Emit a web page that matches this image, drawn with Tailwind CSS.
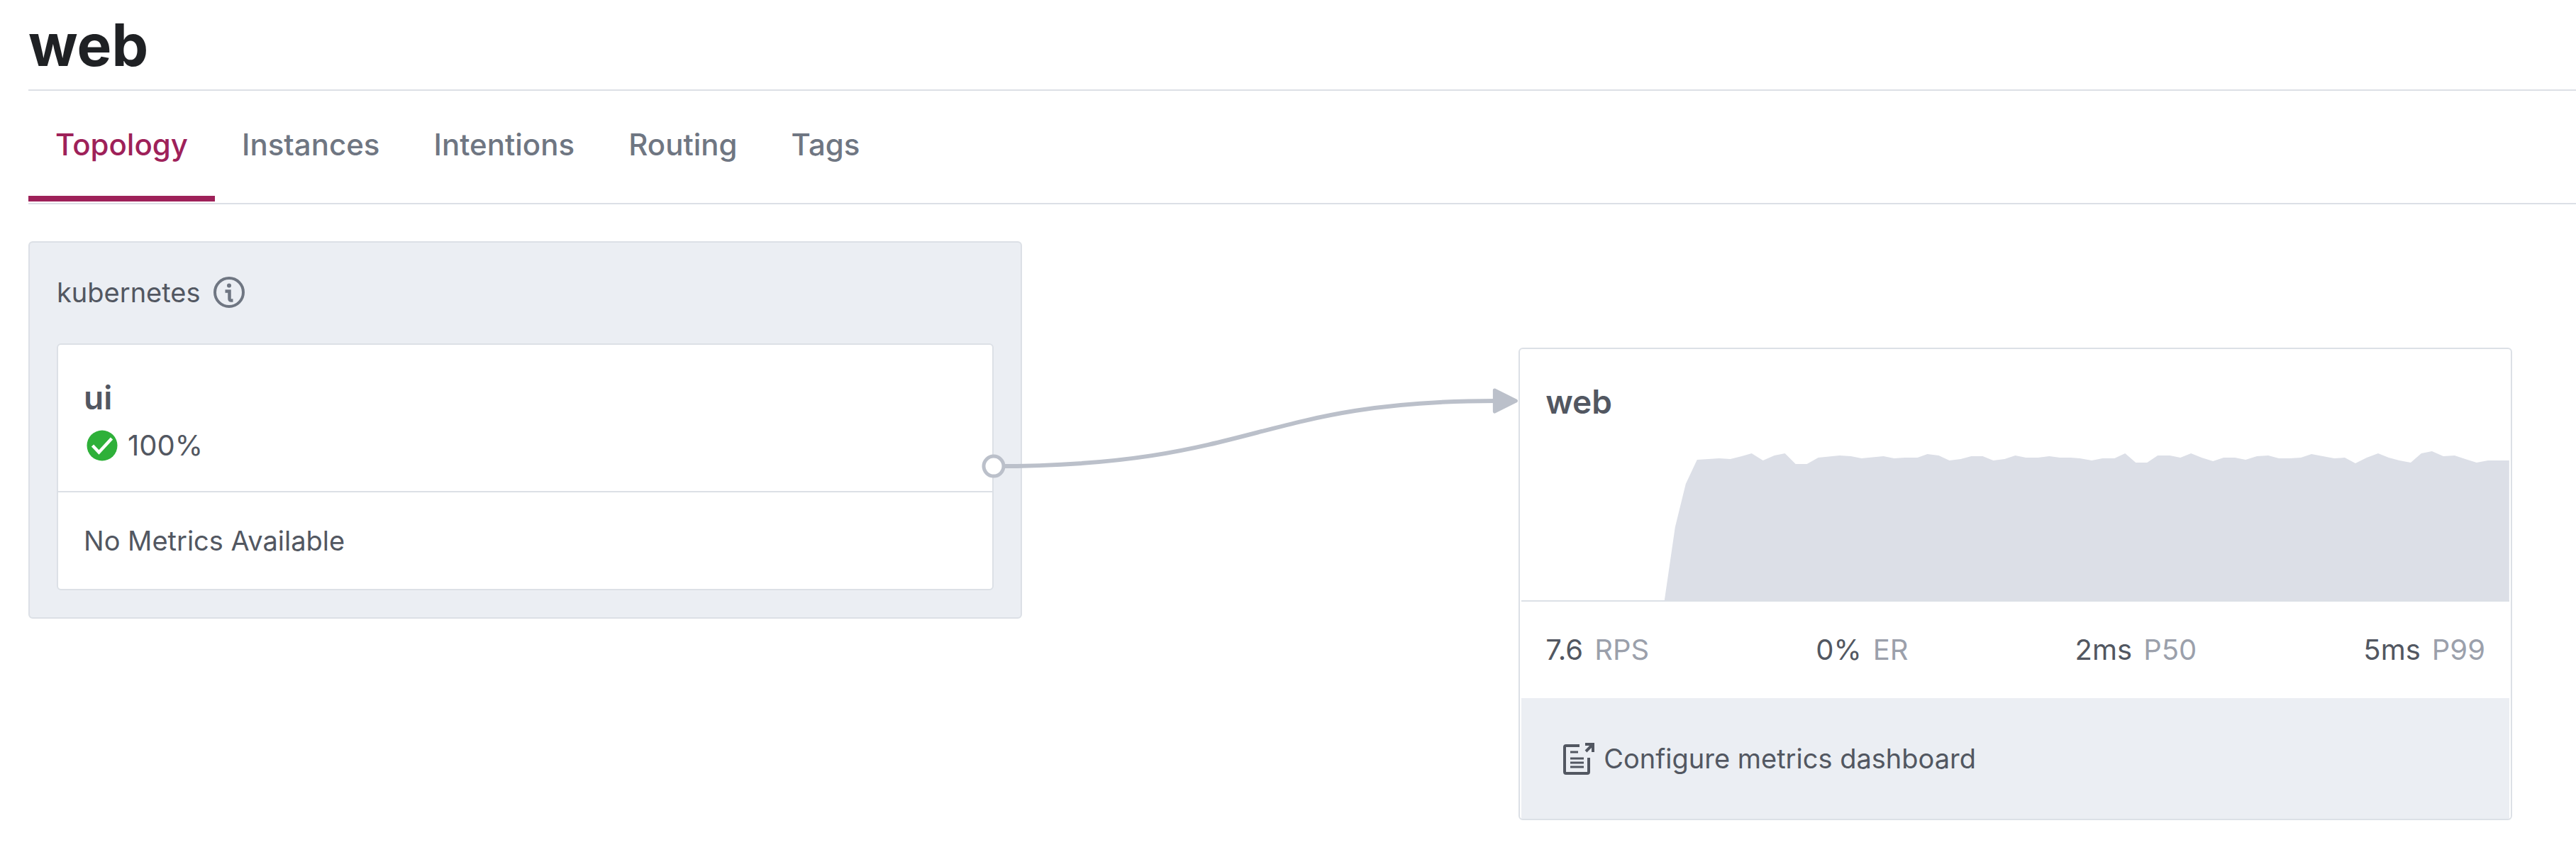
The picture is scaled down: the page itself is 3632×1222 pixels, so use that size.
<!DOCTYPE html>
<html lang="en">
<head>
    <meta charset="UTF-8">
    <meta name="viewport" content="width=device-width, initial-scale=1.0">
    <title>web - Topology</title>
    <script src="https://cdn.jsdelivr.net/npm/@tailwindcss/browser@4"></script>
</head>
<body class="bg-white pl-10 font-['Inter','Liberation_Sans',sans-serif] text-[40px] leading-[48px] text-[#525761]">

    <!-- Header -->
    <header>
        <h1 class="border-b-2 border-[#dce0e6] pt-[14px] pb-3 text-[82px] leading-[100px] font-bold text-[#1f2124]">web</h1>
        <nav class="flex border-b-2 border-[#dce0e6] pb-[2px] text-[42px] font-medium text-[#6f7682]">
            <a href="#topology" aria-current="page" class="border-b-8 border-[#9e2159] px-[38px] pt-[52px] pb-12 text-[#9e2159]">Topology</a>
            <a href="#instances" class="px-[38px] pt-[52px] pb-12">Instances</a>
            <a href="#intentions" class="px-[38px] pt-[52px] pb-12">Intentions</a>
            <a href="#routing" class="px-[38px] pt-[52px] pb-12">Routing</a>
            <a href="#tags" class="px-[38px] pt-[52px] pb-12">Tags</a>
        </nav>
    </header>

    <!-- Topology -->
    <main class="grid grid-cols-[2fr_1fr_2fr] items-start pt-[52px] pr-[90px] pb-16">

        <!-- Downstreams -->
        <section class="rounded-md border-2 border-[#dce0e6] bg-[#ebeef3] p-[38px]">
            <div class="mb-12 flex items-center gap-[18px] pt-2">
                <p class="text-[38px]">kubernetes</p>
                <svg class="size-11 text-[#6f7682]" viewBox="0 0 44 44" fill="none" stroke="currentColor">
                    <circle cx="22" cy="22" r="20" stroke-width="4"/>
                    <circle cx="22" cy="12.500" r="3" fill="currentColor" stroke="none"/>
                    <path d="M16.500 20.500h6v10.500c0 1.500 1 2.500 2.500 2.500h2.500" stroke-width="4.500"/>
                </svg>
            </div>
            <article class="rounded-md border-2 border-[#dce0e6] bg-white">
                <div class="border-b-2 border-[#dce0e6] px-9 pt-[46px] pb-10">
                    <h2 class="text-[46px] leading-[56px] font-semibold">ui</h2>
                    <div class="mt-4 flex items-center gap-[14px] pl-1">
                        <svg class="size-11" viewBox="0 0 44 44" fill="none">
                            <circle cx="22" cy="22" r="21.500" fill="#2eb039"/>
                            <path d="M8.500 22l9 9.500L35.500 12" stroke="#fff" stroke-width="4.500"/>
                        </svg>
                        <span>100%</span>
                    </div>
                </div>
                <p class="px-9 py-11 text-[38px]">No Metrics Available</p>
            </article>
        </section>

        <!-- Connector -->
        <svg class="relative z-10 mt-[190px] w-full overflow-visible" viewBox="0 0 700 150" fill="none" stroke="#bbc0ca">
            <path d="M-40 127C330 127 330 35 668 35" stroke-width="6"/>
            <path d="M666 20l30 15l-30 15z" fill="#bbc0ca" stroke-width="5" stroke-linejoin="round"/>
            <circle cx="-40" cy="127" r="14" fill="#fff" stroke-width="5"/>
        </svg>

        <!-- Service -->
        <article class="mt-[150px] rounded-md border-2 border-[#dce0e6] px-[2px]">
            <h2 class="px-[34px] pt-[46px] pb-9 text-[46px] leading-[56px] font-semibold">web</h2>
            <svg class="h-[218px] w-full border-b-2 border-[#dce0e6]" viewBox="0 0 1394 216" preserveAspectRatio="none">
                <path fill="#dcdfe7" d="M202 216L217 113L232 52L248 18L264 17L279 16L295 17L311 13L325 9L341 19L357 12L372 9L387 24L403 24L419 15L449 12L465 13L480 16L511 13L526 16L541 15L559 15L573 10L589 12L604 19L620 17L635 13L651 13L666 19L682 17L697 12L712 15L729 15L745 13L760 15L775 15L788 16L805 19L820 16L837 16L852 9L867 22L883 22L898 12L915 12L930 15L945 9L960 15L976 20L991 15L1007 15L1022 18L1038 13L1054 12L1069 16L1084 16L1100 15L1115 10L1147 16L1162 15L1177 23L1193 15L1209 9L1224 15L1239 19L1255 22L1270 9L1285 6L1301 13L1317 12L1332 17L1348 22L1364 19L1394 19V216Z"/>
            </svg>
            <dl class="flex justify-between px-[34px] py-11">
                <div class="flex gap-4">
                    <dt class="order-2 text-[#9ba0ab]">RPS</dt>
                    <dd>7.6</dd>
                </div>
                <div class="flex gap-4">
                    <dt class="order-2 text-[#9ba0ab]">ER</dt>
                    <dd>0%</dd>
                </div>
                <div class="flex gap-4">
                    <dt class="order-2 text-[#9ba0ab]">P50</dt>
                    <dd>2ms</dd>
                </div>
                <div class="flex gap-4">
                    <dt class="order-2 text-[#9ba0ab]">P99</dt>
                    <dd>5ms</dd>
                </div>
            </dl>
            <div class="bg-[#ebeef3] px-14 py-[61px]">
                <a href="#metrics" class="inline-flex items-center gap-3 align-top text-[38px]">
                    <svg class="size-12" viewBox="0 0 48 48" fill="none" stroke="currentColor" stroke-width="4">
                        <path d="M26 6H7a2 2 0 0 0-2 2v35a2 2 0 0 0 2 2H37a2 2 0 0 0 2-2V23"/>
                        <path d="M13 15h11M13 24h19M13 30h19M13 36h19" stroke-width="3"/>
                        <path d="M34 4h11v11M45 4L35 14"/>
                    </svg>
                    <span>Configure metrics dashboard</span>
                </a>
            </div>
        </article>
    </main>

</body>
</html>
